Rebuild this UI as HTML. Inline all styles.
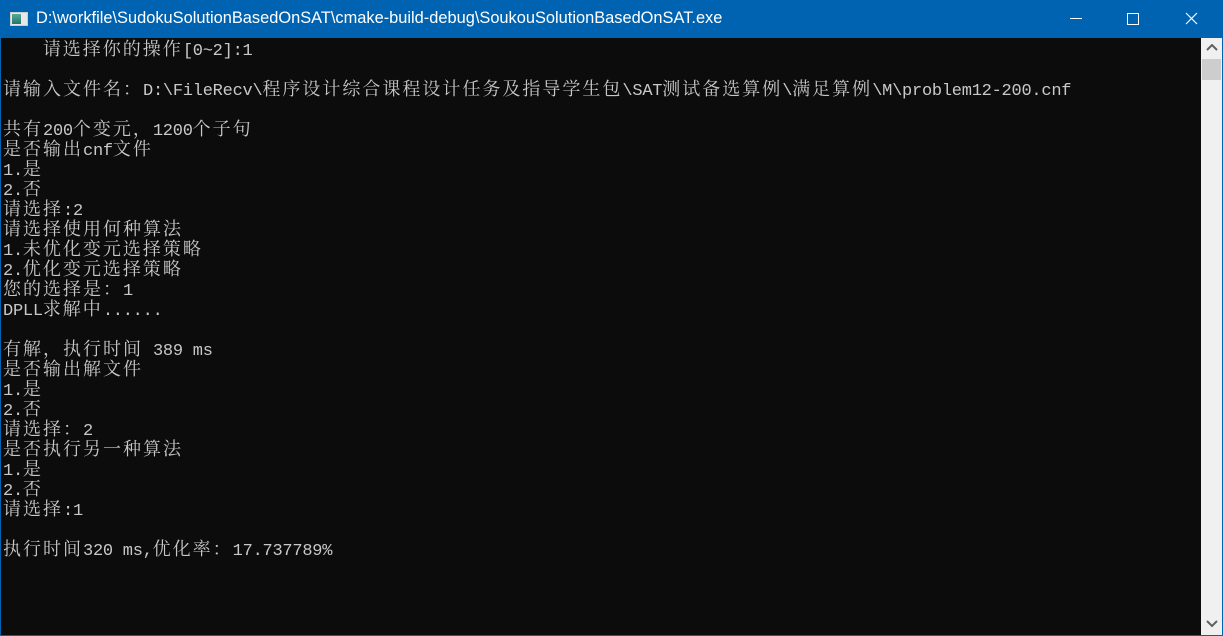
<!DOCTYPE html>
<html><head><meta charset="utf-8"><style>
*{margin:0;padding:0;box-sizing:border-box}
html,body{width:1223px;height:636px;overflow:hidden;background:#0c0c0c}
#tb{position:absolute;left:0;top:0;width:1223px;height:38px;background:#0063b1;color:#fff;font:16.4px "Liberation Sans",sans-serif}
#tb .t{position:absolute;left:36px;top:9px;white-space:nowrap}
#ico{position:absolute;left:10px;top:12px;width:18px;height:14px;background:#e8e8e8;border:1px solid #ccc}
#ico:before{content:"";position:absolute;left:1px;top:1px;width:9px;height:10px;background:linear-gradient(#5a9,#276)}
#con{position:absolute;left:0;top:38px;width:1201px;height:598px;background:#0c0c0c;border-left:1px solid #0063b1;border-bottom:1px solid #0063b1}
.l{position:absolute;left:2px;height:20px;line-height:20px;white-space:pre;color:#c8c8c8;font-family:"Liberation Mono",monospace;font-size:17px;letter-spacing:-0.25px}
.l i{font-style:normal;font-family:"Noto Serif CJK SC","Noto Sans CJK SC",serif;font-size:18px;letter-spacing:2px}
#sb{position:absolute;left:1201px;top:38px;width:22px;height:598px;background:#f0f0f0;border-right:1px solid #0063b1;border-bottom:1px solid #0063b1}
#th{position:absolute;left:1px;top:21px;width:19px;height:21px;background:#cdcdcd}
</style></head><body>
<div id="tb"><div id="ico"></div><div class="t">D:\workfile\SudokuSolutionBasedOnSAT\cmake-build-debug\SoukouSolutionBasedOnSAT.exe</div>
<svg style="position:absolute;left:1060px;top:0" width="163" height="38">
<line x1="10" y1="18.5" x2="22" y2="18.5" stroke="#fff" stroke-width="1"/>
<rect x="67.5" y="13.5" width="11" height="11" fill="none" stroke="#fff"/>
<path d="M126 13 L137 24 M137 13 L126 24" stroke="#fff" stroke-width="1.2"/>
</svg></div>
<div id="con">
<div class="l" style="top:0">    <i>请选择你的操作</i>[0~2]:1</div>
<div class="l" style="top:40px"><i>请输入文件名：</i>D:\FileRecv\<i>程序设计综合课程设计任务及指导学生包</i>\SAT<i>测试备选算例</i>\<i>满足算例</i>\M\problem12-200.cnf</div>
<div class="l" style="top:80px"><i>共有</i>200<i>个变元，</i>1200<i>个子句</i></div>
<div class="l" style="top:100px"><i>是否输出</i>cnf<i>文件</i></div>
<div class="l" style="top:120px">1.<i>是</i></div>
<div class="l" style="top:140px">2.<i>否</i></div>
<div class="l" style="top:160px"><i>请选择</i>:2</div>
<div class="l" style="top:180px"><i>请选择使用何种算法</i></div>
<div class="l" style="top:200px">1.<i>未优化变元选择策略</i></div>
<div class="l" style="top:220px">2.<i>优化变元选择策略</i></div>
<div class="l" style="top:240px"><i>您的选择是：</i>1</div>
<div class="l" style="top:260px">DPLL<i>求解中</i>......</div>
<div class="l" style="top:300px"><i>有解，执行时间</i> 389 ms</div>
<div class="l" style="top:320px"><i>是否输出解文件</i></div>
<div class="l" style="top:340px">1.<i>是</i></div>
<div class="l" style="top:360px">2.<i>否</i></div>
<div class="l" style="top:380px"><i>请选择：</i>2</div>
<div class="l" style="top:400px"><i>是否执行另一种算法</i></div>
<div class="l" style="top:420px">1.<i>是</i></div>
<div class="l" style="top:440px">2.<i>否</i></div>
<div class="l" style="top:460px"><i>请选择</i>:1</div>
<div class="l" style="top:500px"><i>执行时间</i>320 ms,<i>优化率：</i>17.737789%</div>
</div>
<div id="sb">
<svg style="position:absolute;left:5px;top:6px" width="12" height="8"><path d="M1 6 L6 1 L11 6" fill="none" stroke="#606060" stroke-width="2"/></svg>
<div id="th"></div>
<svg style="position:absolute;left:5px;top:582px" width="12" height="8"><path d="M1 1 L6 6 L11 1" fill="none" stroke="#606060" stroke-width="2"/></svg>
</div>
</body></html>
